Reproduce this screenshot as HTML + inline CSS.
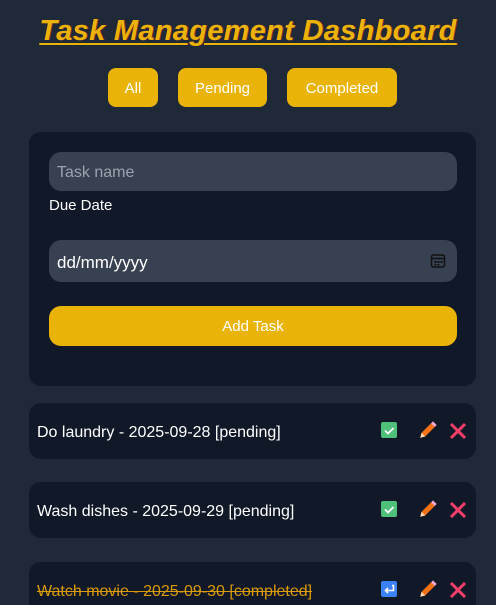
<!DOCTYPE html>
<html><head><meta charset="utf-8"><style>
*{box-sizing:border-box;margin:0;padding:0}
html,body{width:496px;height:605px;overflow:hidden}
body{background:#1f2937;font-family:"Liberation Sans",sans-serif;color:#fff;position:relative}
h1{position:absolute;left:0;right:0;top:15px;text-align:center;font-size:29px;font-style:italic;font-weight:bold;color:#eab308;text-decoration:underline;text-decoration-thickness:2px;text-underline-offset:3px;text-shadow:1px 0 0 #a8321c;letter-spacing:0.3px}
.btn{position:absolute;top:68px;height:39px;background:#eab308;border-radius:8px;color:#fff;font-size:15px;line-height:41px;text-align:center}
.card{position:absolute;left:29px;width:447px;background:#111827;border-radius:12px}
.inp{position:absolute;left:20px;width:408px;background:#374151;border-radius:12px;font-size:16px;padding-left:8px}
.task{font-size:16px;line-height:59px;padding-left:8px;height:56px}
.ic{position:absolute;top:19px}
</style></head><body>
<h1>Task Management Dashboard</h1>
<div class="btn" style="left:108px;width:50px">All</div>
<div class="btn" style="left:178px;width:89px">Pending</div>
<div class="btn" style="left:287px;width:110px">Completed</div>
<div class="card" style="top:132px;height:254px">
 <div class="inp" style="top:20px;height:39px;line-height:42px;color:#9ca3af">Task name</div>
 <div style="position:absolute;left:20px;top:65px;font-size:15px">Due Date</div>
 <div class="inp" style="top:108px;height:42px;line-height:46px;color:#fff;font-size:17px">dd/mm/yyyy
  <svg style="position:absolute;right:11px;top:13px" width="16" height="16" viewBox="0 0 16 16"><rect x="1.5" y="2" width="13" height="12" rx="2" fill="none" stroke="#111" stroke-width="1.5"/><line x1="1.5" y1="5.5" x2="14.5" y2="5.5" stroke="#111" stroke-width="1.5"/><rect x="4.5" y="8" width="2" height="2" fill="#111"/><rect x="7.5" y="8" width="2" height="2" fill="#111"/><rect x="10.5" y="8" width="2" height="2" fill="#111"/><rect x="4.5" y="11" width="2" height="1.5" fill="#111"/><rect x="7.5" y="11" width="2" height="1.5" fill="#111"/></svg>
 </div>
 <div style="position:absolute;left:20px;top:174px;width:408px;height:40px;background:#eab308;border-radius:12px;text-align:center;line-height:42px;font-size:15px">Add Task</div>
</div>

<div class="card task" style="top:403px">Do laundry - 2025-09-28 [pending]
 <svg class="ic" style="left:352px" width="17" height="17" viewBox="0 0 17 17"><rect width="16" height="16" rx="2" fill="#4ec07a"/><path d="M4 8.5l3 3 5.5-5.5" fill="none" stroke="#fff" stroke-width="1.8"/></svg>
 <svg class="ic" style="left:389px;top:17px" width="20" height="20" viewBox="0 0 18 18"><path d="M2 16l1.2-4.5 8.5-8.5 3.3 3.3-8.5 8.5z" fill="#f97316"/><path d="M11.7 3l1.8-1.8 3.3 3.3L15 6.3z" fill="#f9a8d4"/><path d="M2 16l1.2-4.5 3.3 3.3z" fill="#fcd9b6"/></svg>
 <svg class="ic" style="left:420px" width="18" height="18" viewBox="0 0 18 18"><path d="M2 2L16 16M16 2L2 16" stroke="#f43f6b" stroke-width="3"/></svg>
</div>
<div class="card task" style="top:482px">Wash dishes - 2025-09-29 [pending]
 <svg class="ic" style="left:352px" width="17" height="17" viewBox="0 0 17 17"><rect width="16" height="16" rx="2" fill="#4ec07a"/><path d="M4 8.5l3 3 5.5-5.5" fill="none" stroke="#fff" stroke-width="1.8"/></svg>
 <svg class="ic" style="left:389px;top:17px" width="20" height="20" viewBox="0 0 18 18"><path d="M2 16l1.2-4.5 8.5-8.5 3.3 3.3-8.5 8.5z" fill="#f97316"/><path d="M11.7 3l1.8-1.8 3.3 3.3L15 6.3z" fill="#f9a8d4"/><path d="M2 16l1.2-4.5 3.3 3.3z" fill="#fcd9b6"/></svg>
 <svg class="ic" style="left:420px" width="18" height="18" viewBox="0 0 18 18"><path d="M2 2L16 16M16 2L2 16" stroke="#f43f6b" stroke-width="3"/></svg>
</div>
<div class="card task" style="top:562px;color:#d99a0b;text-decoration:line-through">Watch movie - 2025-09-30 [completed]
 <svg class="ic" style="left:352px" width="17" height="17" viewBox="0 0 17 17"><rect width="16" height="16" rx="2" fill="#3b82f6"/><path d="M11 4.5h1.5v5H5M7 7L4.5 9.5 7 12" fill="none" stroke="#fff" stroke-width="1.6"/></svg>
 <svg class="ic" style="left:389px;top:17px" width="20" height="20" viewBox="0 0 18 18"><path d="M2 16l1.2-4.5 8.5-8.5 3.3 3.3-8.5 8.5z" fill="#f97316"/><path d="M11.7 3l1.8-1.8 3.3 3.3L15 6.3z" fill="#f9a8d4"/><path d="M2 16l1.2-4.5 3.3 3.3z" fill="#fcd9b6"/></svg>
 <svg class="ic" style="left:420px" width="18" height="18" viewBox="0 0 18 18"><path d="M2 2L16 16M16 2L2 16" stroke="#f43f6b" stroke-width="3"/></svg>
</div>
</body></html>
